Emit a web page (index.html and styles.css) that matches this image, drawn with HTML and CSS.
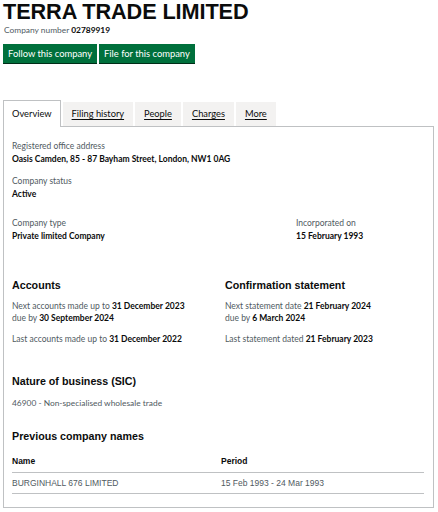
FILE: index.html
```html
<!DOCTYPE html>
<html>
<head>
<meta charset="utf-8">
<link rel="stylesheet" href="styles.css">
</head>
<body>
<div class="page">
  <h1 class="title">TERRA TRADE LIMITED</h1>
  <p class="number">Company number <strong>02789919</strong></p>
  <div class="actions">
    <span class="btn">Follow this company</span>
    <span class="btn">File for this company</span>
  </div>
  <nav class="tabs">
    <span class="tab active">Overview</span>
    <a class="tab">Filing history</a>
    <a class="tab">People</a>
    <a class="tab">Charges</a>
    <a class="tab">More</a>
  </nav>
  <div class="panel">
    <dl class="field">
      <dt>Registered office address</dt>
      <dd>Oasis Camden, 85 - 87 Bayham Street, London, NW1 0AG</dd>
    </dl>
    <dl class="field">
      <dt>Company status</dt>
      <dd>Active</dd>
    </dl>
    <div class="row type-row">
      <dl class="field">
        <dt>Company type</dt>
        <dd>Private limited Company</dd>
      </dl>
      <dl class="field inc">
        <dt>Incorporated on</dt>
        <dd>15 February 1993</dd>
      </dl>
    </div>
    <div class="row cols">
      <div class="col">
        <h2 class="heading">Accounts</h2>
        <p class="line">Next accounts made up to <strong>31 December 2023</strong><br>due by <strong>30 September 2024</strong></p>
        <p class="line">Last accounts made up to <strong>31 December 2022</strong></p>
      </div>
      <div class="col">
        <h2 class="heading">Confirmation statement</h2>
        <p class="line">Next statement date <strong>21 February 2024</strong><br>due by <strong>6 March 2024</strong></p>
        <p class="line">Last statement dated <strong>21 February 2023</strong></p>
      </div>
    </div>
    <h2 class="heading sic-h">Nature of business (SIC)</h2>
    <p class="sic">46900 - Non-specialised wholesale trade</p>
    <h2 class="heading prev-h">Previous company names</h2>
    <table class="names">
      <thead><tr><th>Name</th><th>Period</th></tr></thead>
      <tbody><tr><td>BURGINHALL 676 LIMITED</td><td>15 Feb 1993 - 24 Mar 1993</td></tr></tbody>
    </table>
  </div>
</div>
</body>
</html>
```

FILE: styles.css
```css
* { box-sizing: border-box; }
body {
  margin: 0;
  background: #fff;
  color: #0b0c0c;
  font-family: Lato, "Noto Sans", sans-serif;
}
.page {
  width: 432px;
  padding: 0 0 0 3px;
}
.title {
  margin: 0;
  font-family: "Liberation Sans", Arial, sans-serif;
  font-weight: 700;
  font-size: 21.7px;
  line-height: 24.5px;
  letter-spacing: -0.1px;
}
.number {
  margin: 0 0 0 1px;
  font-size: 8.4px;
  line-height: 11px;
  color: #505a5f;
}
.number strong { color: #0b0c0c; }
.actions {
  display: flex;
  gap: 2px;
  margin-top: 8px;
}
.btn {
  display: block;
  background: #00703c;
  color: #fff;
  font-size: 9.4px;
  line-height: 19px;
  height: 19px;
  padding: 0 5px;
  box-shadow: 0 1px 0 #002d18;
}
.tabs {
  display: flex;
  align-items: flex-end;
  gap: 2px;
  margin-top: 37px;
  height: 26px;
}
.tab {
  display: block;
  height: 24px;
  padding: 0 9px;
  background: #f3f2f1;
  color: #0b0c0c;
  font-size: 9.3px;
  line-height: 24px;
  text-decoration: underline;
  text-underline-offset: 2px;
  text-decoration-thickness: 1px;
}
.tab.active {
  height: 27px;
  margin-bottom: -1px;
  background: #fff;
  border: 1px solid #bfc1c3;
  border-bottom: 0;
  text-decoration: none;
  line-height: 25px;
  padding: 0 8px;
  position: relative;
  z-index: 1;
}
.panel {
  width: 431px;
  height: 382px;
  border: 1px solid #bfc1c3;
  padding: 13px 9px 0 8px;
}
.field { margin: 0; }
.field dt {
  font-size: 8.5px;
  line-height: 12px;
  color: #505a5f;
}
.field dd {
  margin: 1px 0 0 0;
  font-size: 8.5px;
  line-height: 12px;
  font-weight: 700;
}
.field + .field { margin-top: 10px; }
.row { display: flex; }
.type-row { margin-top: 17px; }
.type-row .field + .field { margin-top: 0; }
.type-row .field:first-child { width: 284px; flex-shrink: 0; }
.cols { margin-top: 36px; }
.col { width: 213px; flex-shrink: 0; }
.col + .col { width: auto; flex: 1; }
.heading {
  margin: 0;
  font-family: "Liberation Sans", Arial, sans-serif;
  font-size: 10.7px;
  line-height: 14px;
  font-weight: 700;
}
.line {
  margin: 8px 0 0 0;
  font-size: 8.5px;
  line-height: 12px;
  color: #505a5f;
}
.line strong { color: #0b0c0c; }
.line + .line { margin-top: 9px; }
.sic-h { margin-top: 29px; }
.sic {
  margin: 9px 0 0 0;
  font-size: 8.4px;
  line-height: 12px;
  color: #505a5f;
}
.prev-h { margin-top: 20px; }
.names {
  margin-top: 11px;
  width: 412px;
  border-collapse: collapse;
  font-family: "Liberation Sans", Arial, sans-serif;
  font-size: 8.5px;
}
.names th {
  text-align: left;
  font-weight: 700;
  padding: 2px 0 6px 0;
  border-bottom: 1px solid #bfc1c3;
}
.names td {
  padding: 5px 0 5px 0;
  color: #505a5f;
  border-bottom: 1px solid #bfc1c3;
}
.names th:first-child, .names td:first-child { width: 209px; }
```
